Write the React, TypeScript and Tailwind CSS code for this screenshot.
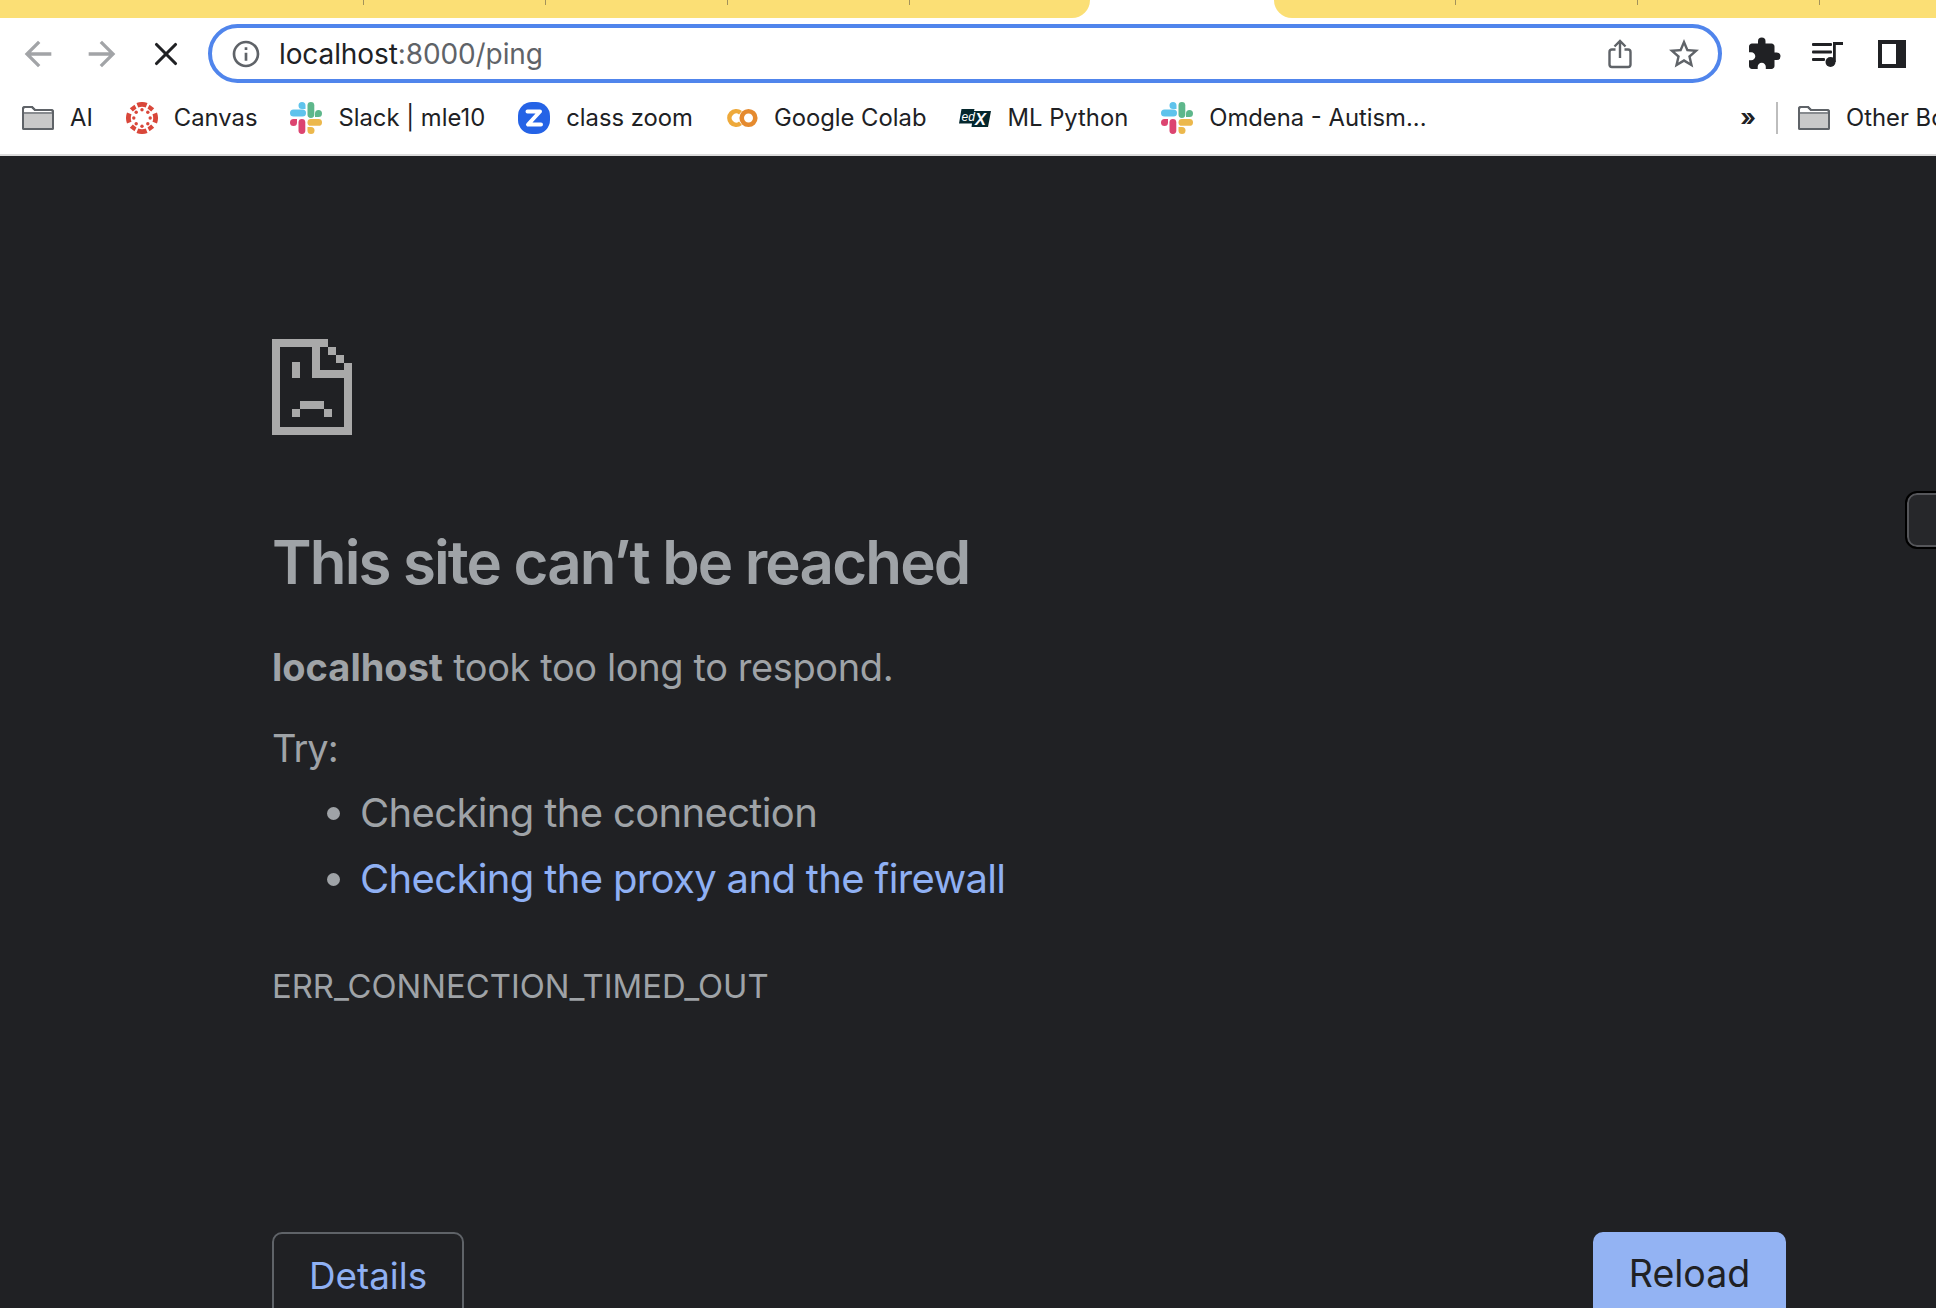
import React from "react";
import { MdArrowBack, MdArrowForward, MdInfoOutline, MdStarBorder, MdExtension } from "react-icons/md";
import { X } from "lucide-react";

const Folder = () => (
  <svg width="32" height="24" viewBox="0 0 32 24" className="shrink-0">
    <path d="M1 22V3a2 2 0 0 1 2-2h7l3 3h16a2 2 0 0 1 2 2v16a1 1 0 0 1-1 1H2a1 1 0 0 1-1-1z" fill="#fff" stroke="#5f6368" strokeWidth="2" />
    <path d="M2 8h28v14H2z" fill="#c9c9c9" />
    <path d="M1 7h30" stroke="#5f6368" strokeWidth="1.5" />
    <path d="M1 22V3a2 2 0 0 1 2-2h7l3 3h16a2 2 0 0 1 2 2v16a1 1 0 0 1-1 1H2a1 1 0 0 1-1-1z" fill="none" stroke="#5f6368" strokeWidth="2" />
  </svg>
);

const Canvas = () => (
  <svg width="32" height="32" viewBox="0 0 32 32" className="shrink-0" fill="#d9473a">
    <path d="M10.500 1a16 16 0 0 1 11 0L19.800 5.500a11 11 0 0 0-7.600 0z" />
    <path d="M21.500 31a16 16 0 0 1-11 0L12.200 26.500a11 11 0 0 0 7.600 0z" />
    <path d="M1 21.500a16 16 0 0 1 0-11L5.500 12.200a11 11 0 0 0 0 7.600z" />
    <path d="M31 10.500a16 16 0 0 1 0 11L26.500 19.800a11 11 0 0 0 0-7.600z" />
    <path d="M3.800 6.300L8.500 2.700 10.500 6.400 6.800 9.600z" />
    <path d="M28.200 6.300L23.500 2.700 21.500 6.400 25.200 9.600z" />
    <path d="M3.800 25.700L8.500 29.300 10.500 25.600 6.800 22.400z" />
    <path d="M28.200 25.700L23.500 29.300 21.500 25.600 25.200 22.400z" />
    <circle cx="16" cy="7.800" r="1.700" />
    <circle cx="16" cy="24.200" r="1.700" />
    <circle cx="7.800" cy="16" r="1.700" />
    <circle cx="24.200" cy="16" r="1.700" />
    <circle cx="10.200" cy="10.200" r="1.700" />
    <circle cx="21.800" cy="10.200" r="1.700" />
    <circle cx="10.200" cy="21.800" r="1.700" />
    <circle cx="21.800" cy="21.800" r="1.700" />
  </svg>
);

const Slack = () => (
  <svg width="32" height="32" viewBox="0 0 32 32" className="shrink-0">
    <rect x="0" y="7.500" width="16" height="7" rx="3.500" fill="#5fc3ec" />
    <path d="M8.500 3.500a3.500 3.500 0 0 1 7 0V7h-3.500a3.500 3.500 0 0 1-3.500-3.500z" fill="#5fc3ec" />
    <rect x="17.500" y="0" width="6.800" height="16" rx="3.400" fill="#5eb78b" />
    <path d="M25 11.500a3.500 3.500 0 1 1 3.500 3.500H25z" fill="#5eb78b" />
    <path d="M7 20.500a3.500 3.500 0 1 1-3.500-3.500H7z" fill="#dc4470" />
    <rect x="8.500" y="17" width="6.800" height="15" rx="3.400" fill="#dc4470" />
    <rect x="17.500" y="17" width="14.500" height="6.800" rx="3.400" fill="#ecb84c" />
    <path d="M17.500 25H21a3.500 3.500 0 1 1-3.500 3.500z" fill="#ecb84c" />
  </svg>
);

const Zoom = () => (
  <svg width="32" height="32" viewBox="0 0 32 32" className="shrink-0">
    <rect width="32" height="32" rx="14" fill="#2563e6" />
    <path d="M9.500 9.500H22L10 22.500H23" fill="none" stroke="#fff" strokeWidth="4" strokeLinecap="round" strokeLinejoin="round" />
  </svg>
);

const Colab = () => (
  <svg width="32" height="32" viewBox="0 0 32 32" className="shrink-0">
    <circle cx="22.500" cy="16" r="6.800" fill="none" stroke="#e58a2e" strokeWidth="4.600" />
    <path d="M14.500 10.700a6.800 6.800 0 1 0 0 10.600" fill="none" stroke="#eea93a" strokeWidth="4.600" />
  </svg>
);

const EdX = () => (
  <svg width="32" height="18" viewBox="0 0 32 18" className="shrink-0">
    <path d="M2.500 0H15.500L15 2H32L29 18H12.500L13 14.500H0z" fill="#05272d" />
    <text x="2.500" y="11.500" fontSize="12" fontStyle="italic" fontFamily="Liberation Sans, sans-serif" fill="#fff">ed</text>
    <text x="16" y="16" fontSize="16.500" fontStyle="italic" fontWeight="700" fontFamily="Liberation Sans, sans-serif" fill="#fff">X</text>
  </svg>
);

const Share = () => (
  <svg width="24" height="30" viewBox="0 0 24 30" fill="none" stroke="#5f6368" strokeWidth="2.400">
    <path d="M7.500 10.500H4a2.500 2.500 0 0 0-2.500 2.500v12.500A2.500 2.500 0 0 0 4 28h16a2.500 2.500 0 0 0 2.500-2.500V13a2.500 2.500 0 0 0-2.500-2.500h-3.500" />
    <path d="M12 19V2M6.500 7.500 12 2l5.500 5.500" />
  </svg>
);

const Media = () => (
  <svg width="32" height="26" viewBox="0 0 32 26" fill="#202124">
    <rect x="0" y="2" width="20" height="3" rx="1" />
    <rect x="0" y="9.500" width="20" height="3" rx="1" />
    <rect x="0" y="17" width="13" height="3" rx="1" />
    <circle cx="18.500" cy="21" r="5" />
    <path d="M21 21V1h10v3h-7.200v17z" />
  </svg>
);

const SadTab = () => (
  <svg width="80" height="96" viewBox="0 0 80 96" fill="#a9a9a9" className="block" shapeRendering="crispEdges">
    <path d="M0 0h56v8H8v80h64V39H48v-8h24v-7h8v72H0z" />
    <path d="M40 0h8v39h-8zM56 8h8v8h-8zM64 16h8v8h-8zM20 23h8v16h-8zM28 62h24v8H28zM20 70h8v8h-8zM52 70h8v8h-8z" />
  </svg>
);

function Bookmark({ icon, label }: { icon: React.ReactNode; label: string }) {
  return (
    <div className="flex items-center gap-[16px] shrink-0">
      <span className="flex items-center justify-center w-[32px] h-[32px]">{icon}</span>
      <span>{label}</span>
    </div>
  );
}

export default function App() {
  return (
    <div className="relative w-[1936px] h-[1308px] overflow-hidden bg-[#202124] font-['Inter',sans-serif]">
      {/* tab strip */}
      <div className="flex h-[18px] bg-white">
        <div className="flex w-[1090px] rounded-br-[18px] bg-[#fbdf75]">
          <i className="ml-[363px] block h-[5px] w-[1px] bg-[#a3925a]" />
          <i className="ml-[181px] block h-[5px] w-[1px] bg-[#a3925a]" />
          <i className="ml-[181px] block h-[5px] w-[1px] bg-[#a3925a]" />
          <i className="ml-[181px] block h-[5px] w-[1px] bg-[#a3925a]" />
        </div>
        <div className="ml-[184px] flex flex-1 rounded-bl-[18px] bg-[#fbdf75]">
          <i className="ml-[181px] block h-[5px] w-[1px] bg-[#a3925a]" />
          <i className="ml-[181px] block h-[5px] w-[1px] bg-[#a3925a]" />
          <i className="ml-[181px] block h-[5px] w-[1px] bg-[#a3925a]" />
        </div>
      </div>

      {/* toolbar */}
      <div className="flex h-[71px] items-start bg-white pl-[6px] pt-[6px]">
        <div className="flex h-[59px] w-[64px] items-center justify-center text-[#a2a4a7]"><MdArrowBack size={40} /></div>
        <div className="flex h-[59px] w-[64px] items-center justify-center text-[#a2a4a7]"><MdArrowForward size={40} /></div>
        <div className="flex h-[59px] w-[64px] items-center justify-center text-[#202124]"><X size={38} strokeWidth={2} /></div>
        <div className="ml-[10px] flex h-[59px] w-[1514px] items-center rounded-full border-4 border-[#5085ec] pl-[20px]">
          <MdInfoOutline size={32} className="-ml-[2px] text-[#5f6368]" />
          <span className="ml-[17px] text-[28px] leading-none tracking-[-0.1px] text-[#5f6368]"><span className="text-[#202124]">localhost</span>:8000/ping</span>
          <div className="ml-auto flex items-center pr-[2px]">
            <div className="flex w-[64px] items-center justify-center"><Share /></div>
            <div className="flex w-[64px] items-center justify-center text-[#5f6368]"><MdStarBorder size={36} /></div>
          </div>
        </div>
        <div className="ml-[10px] flex h-[59px] w-[64px] items-center justify-center text-[#202124]"><MdExtension size={36} /></div>
        <div className="flex h-[59px] w-[64px] items-center justify-center"><Media /></div>
        <div className="flex h-[59px] w-[64px] items-center justify-center">
          <div className="h-[28px] w-[28px] border-y-4 border-l-4 border-r-[10px] border-[#202124]" />
        </div>
      </div>

      {/* bookmarks */}
      <div className="flex h-[67px] items-center overflow-hidden whitespace-nowrap border-b-2 border-[#dcdcdc] bg-white pb-[8px] pl-[22px] text-[23.8px] text-[#202124]">
        <div className="flex gap-[33px]">
          <Bookmark icon={<Folder />} label="AI" />
          <Bookmark icon={<Canvas />} label="Canvas" />
          <Bookmark icon={<Slack />} label="Slack | mle10" />
          <Bookmark icon={<Zoom />} label="class zoom" />
          <Bookmark icon={<Colab />} label="Google Colab" />
          <Bookmark icon={<EdX />} label="ML Python" />
          <Bookmark icon={<Slack />} label="Omdena - Autism..." />
        </div>
        <span className="ml-auto w-[30px] shrink-0 text-center font-bold">»</span>
        <i className="ml-[13px] block h-[32px] w-[2px] shrink-0 bg-[#bdbdbd]" />
        <div className="ml-[20px] flex w-[138px] shrink-0 items-center gap-[16px]">
          <Folder />
          <span>Other Bookmarks</span>
        </div>
      </div>

      {/* error page */}
      <main className="ml-[272px] w-[1514px] pt-[183px] font-['Inter',sans-serif] text-[#9fa3a7]">
        <SadTab />
        <h1 className="mt-[89px] text-[60px] font-semibold leading-[76px] tracking-[-1.85px]">This site can’t be reached</h1>
        <p className="mt-[41px] text-[38px] leading-[52px] tracking-[-0.4px]"><b className="font-bold tracking-normal">localhost</b> took too long to respond.</p>
        <p className="mt-[29px] text-[38px] leading-[52px] tracking-[-1px]">Try:</p>
        <ul className="mt-[6px] list-disc pl-[88px] text-[40px] leading-[66px] tracking-[-0.65px]">
          <li>Checking the connection</li>
          <li className="text-[#8fb0f3] marker:text-[#9fa3a7]">Checking the proxy and the firewall</li>
        </ul>
        <p className="mt-[53px] text-[32.8px] leading-[42px]">ERR_CONNECTION_TIMED_OUT</p>
        <div className="mt-[225px] flex items-start justify-between">
          <button className="h-[90px] w-[192px] rounded-[10px] border-2 border-[#5f6368] pb-[2px] text-[36.8px] text-[#8fb0f3]">Details</button>
          <button className="h-[90px] w-[193px] rounded-[10px] bg-[#93b3f3] pb-[6px] text-[37.5px] text-[#202124]">Reload</button>
        </div>
      </main>

      {/* overlay tab at the right edge */}
      <div className="absolute left-[1907px] top-[493px] h-[54px] w-[60px] rounded-[10px] border-2 border-[#55565a] bg-[#26272a] outline outline-2 outline-black" />
    </div>
  );
}
